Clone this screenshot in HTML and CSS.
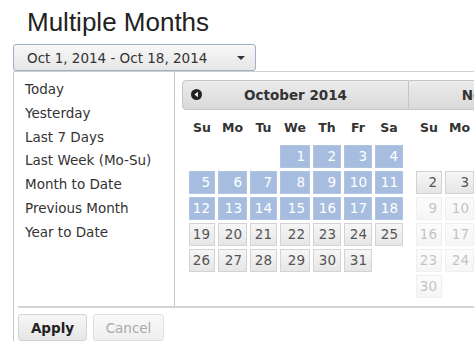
FILE: index.html
```html
<!DOCTYPE html>
<html lang="en">
<head>
  <meta charset="UTF-8">
  <title>Multiple Months</title>
  <link rel="stylesheet" href="styles.css">
</head>
<body>
  <h1>Multiple Months</h1>

  <!-- Range Trigger -->
  <div class="range-trigger">
    <span>Oct 1, 2014 - Oct 18, 2014</span>
    <span class="caret"></span>
  </div>

  <!-- Picker Panel -->
  <div class="picker">
    <div class="picker-main">
      <ul class="presets">
        <li>Today</li>
        <li>Yesterday</li>
        <li>Last 7 Days</li>
        <li>Last Week (Mo-Su)</li>
        <li>Month to Date</li>
        <li>Previous Month</li>
        <li>Year to Date</li>
      </ul>

      <div class="calendars">
        <!-- October -->
        <div class="month">
          <div class="month-header first">
            <span class="prev">
              <svg viewBox="0 0 12 12"><circle cx="6" cy="6" r="6" fill="#222"/><path d="M7.5 3 L3.8 6 L7.5 9 Z" fill="#fff"/></svg>
            </span>
            October 2014
          </div>
          <div class="grid">
            <div class="dow">Su</div><div class="dow">Mo</div><div class="dow">Tu</div><div class="dow">We</div><div class="dow">Th</div><div class="dow">Fr</div><div class="dow">Sa</div>
            <div></div><div></div><div></div>
            <div class="day sel">1</div><div class="day sel">2</div><div class="day sel">3</div><div class="day sel">4</div>
            <div class="day sel">5</div><div class="day sel">6</div><div class="day sel">7</div><div class="day sel">8</div><div class="day sel">9</div><div class="day sel">10</div><div class="day sel">11</div>
            <div class="day sel">12</div><div class="day sel">13</div><div class="day sel">14</div><div class="day sel">15</div><div class="day sel">16</div><div class="day sel">17</div><div class="day sel">18</div>
            <div class="day">19</div><div class="day">20</div><div class="day">21</div><div class="day">22</div><div class="day">23</div><div class="day">24</div><div class="day">25</div>
            <div class="day">26</div><div class="day">27</div><div class="day">28</div><div class="day">29</div><div class="day">30</div><div class="day">31</div>
          </div>
        </div>

        <!-- November -->
        <div class="month">
          <div class="month-header">November 2014</div>
          <div class="grid">
            <div class="dow">Su</div><div class="dow">Mo</div><div class="dow">Tu</div><div class="dow">We</div><div class="dow">Th</div><div class="dow">Fr</div><div class="dow">Sa</div>
            <div></div><div></div><div></div><div></div><div></div><div></div>
            <div class="day">1</div>
            <div class="day">2</div><div class="day">3</div><div class="day">4</div><div class="day">5</div><div class="day">6</div><div class="day">7</div><div class="day">8</div>
            <div class="day off">9</div><div class="day off">10</div><div class="day off">11</div><div class="day off">12</div><div class="day off">13</div><div class="day off">14</div><div class="day off">15</div>
            <div class="day off">16</div><div class="day off">17</div><div class="day off">18</div><div class="day off">19</div><div class="day off">20</div><div class="day off">21</div><div class="day off">22</div>
            <div class="day off">23</div><div class="day off">24</div><div class="day off">25</div><div class="day off">26</div><div class="day off">27</div><div class="day off">28</div><div class="day off">29</div>
            <div class="day off">30</div>
          </div>
        </div>
      </div>
    </div>

    <!-- Buttons -->
    <div class="picker-buttons">
      <button class="btn apply">Apply</button>
      <button class="btn cancel">Cancel</button>
    </div>
  </div>
</body>
</html>
```

FILE: styles.css
```css
/* General */
body {
  margin: 0;
  font-family: "DejaVu Sans", Verdana, sans-serif;
  font-size: 13.5px;
  color: #333;
  background: #fff;
  overflow: hidden;
}
h1 {
  margin: 0;
  padding: 6px 0 0 27px;
  height: 38px;
  font-family: "Liberation Sans", Arial, sans-serif;
  font-weight: normal;
  font-size: 26px;
  line-height: 32px;
  color: #222;
}

/* Range Trigger */
.range-trigger {
  margin-left: 13px;
  height: 25px;
  border: 1px solid #9fb0c9;
  border-radius: 3px;
  background: linear-gradient(#f8f8f8, #e6e6e6);
  display: flex;
  align-items: center;
  justify-content: space-between;
  padding: 0 0 0 13px;
  width: 228px;
  color: #333;
}
.range-trigger .caret {
  width: 0;
  height: 0;
  border-left: 4px solid transparent;
  border-right: 4px solid transparent;
  border-top: 4px solid #333;
  margin-right: 10px;
}

/* Picker Panel */
.picker {
  margin-left: 13px;
  border-left: 1px solid #c8c8c8;
  border-top: 1px solid #d0d0d0;
  padding-left: 4px;
  width: 900px;
}
.picker-main {
  display: flex;
  border-bottom: 2px solid #d4d4d4;
  height: 234px;
}

/* Presets */
.presets {
  list-style: none;
  margin: 0;
  padding: 6px 0 0 7px;
  width: 149px;
  border-right: 1px solid #c8c8c8;
}
.presets li {
  line-height: 23.8px;
  color: #333;
}

/* Calendars */
.calendars {
  display: flex;
  padding: 8px 0 0 7px;
}
.month {
  width: 227px;
}
.month-header {
  position: relative;
  height: 28px;
  line-height: 28px;
  border: 1px solid #c5c5c5;
  border-left: none;
  background: linear-gradient(#ececec, #d9d9d9);
  text-align: center;
  font-weight: bold;
  font-size: 13.5px;
  color: #333;
}
.month-header.first {
  border-left: 1px solid #c5c5c5;
  border-radius: 4px 0 0 4px;
}
.prev {
  position: absolute;
  left: 8px;
  top: 8px;
  width: 11px;
  height: 11px;
}
.prev svg {
  display: block;
  width: 11px;
  height: 11px;
}
.grid {
  display: grid;
  grid-template-columns: 26px 29px 27px 30px 28px 28px 28px;
  column-gap: 3px;
  row-gap: 3px;
  margin-left: 7px;
}
.dow {
  text-align: center;
  font-weight: bold;
  font-size: 12.5px;
  height: 32px;
  line-height: 35px;
  color: #333;
}
.day {
  height: 21px;
  line-height: 21px;
  border: 1px solid #d3d3d3;
  background: linear-gradient(#f6f6f6, #e6e6e6);
  text-align: right;
  padding-right: 4px;
  color: #555;
}
.day.sel {
  background: #a6bde0;
  border-color: #b0c4e2;
  color: #fff;
}
.day.off {
  opacity: 0.35;
}

/* Buttons */
.picker-buttons {
  display: flex;
  gap: 6px;
  padding-top: 6px;
}
.btn {
  height: 27px;
  border: 1px solid #d3d3d3;
  border-radius: 3px;
  background: linear-gradient(#f6f6f6, #e6e6e6);
  font-family: "DejaVu Sans", Verdana, sans-serif;
  font-size: 13.5px;
  padding: 0;
}
.btn.apply {
  width: 69px;
  font-weight: bold;
  color: #222;
}
.btn.cancel {
  width: 71px;
  color: #aaa;
  border-color: #e0e0e0;
  background: linear-gradient(#f9f9f9, #efefef);
}
```
